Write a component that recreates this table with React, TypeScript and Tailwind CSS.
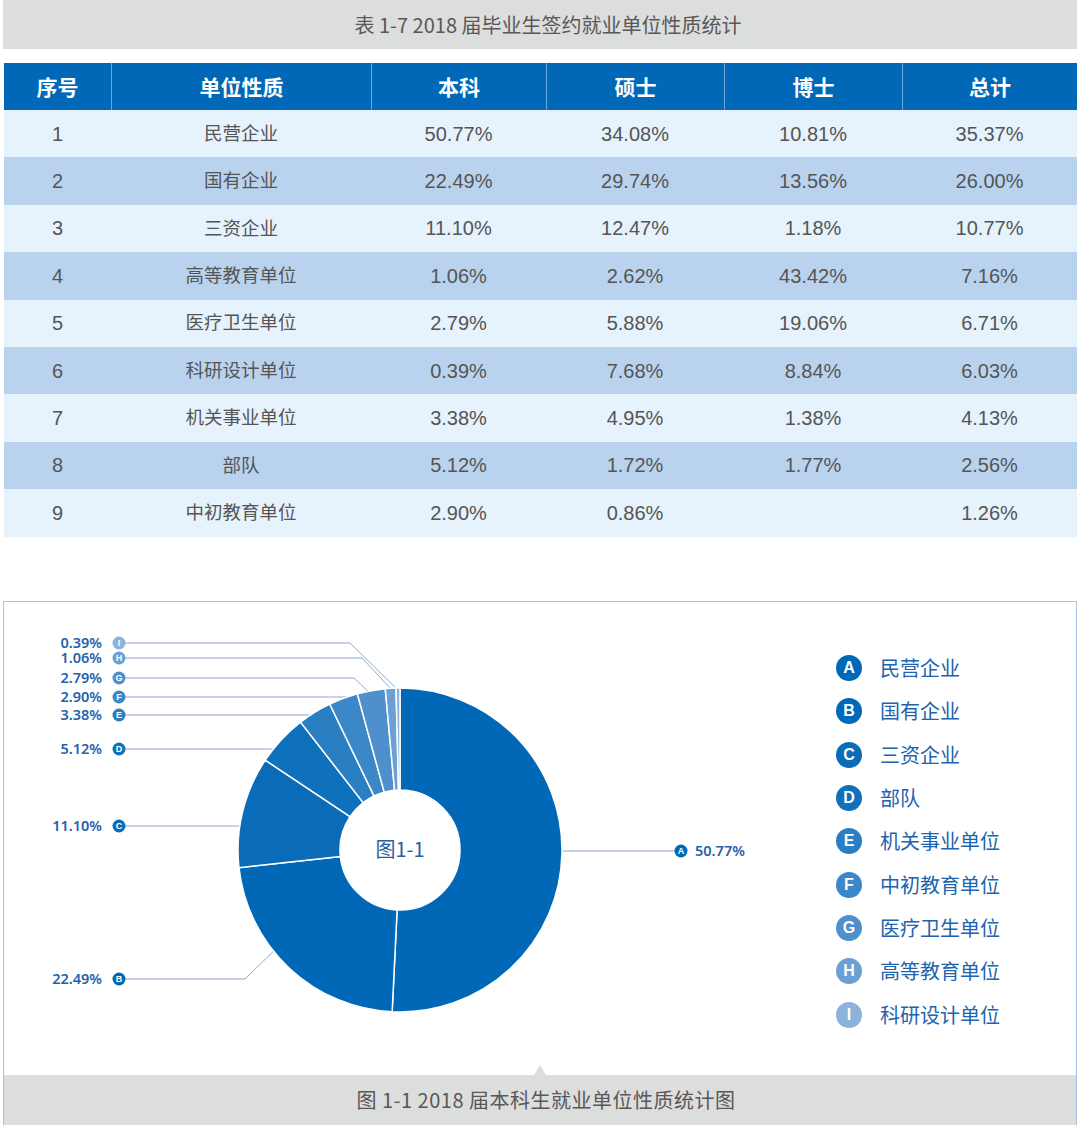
import React from "react";

/* -------------------------------------------------------------------------- */

const TABLE_HEAD = ["序号", "单位性质", "本科", "硕士", "博士", "总计"];

const TABLE_ROWS = [
  ["1", "民营企业", "50.77%", "34.08%", "10.81%", "35.37%"],
  ["2", "国有企业", "22.49%", "29.74%", "13.56%", "26.00%"],
  ["3", "三资企业", "11.10%", "12.47%", "1.18%", "10.77%"],
  ["4", "高等教育单位", "1.06%", "2.62%", "43.42%", "7.16%"],
  ["5", "医疗卫生单位", "2.79%", "5.88%", "19.06%", "6.71%"],
  ["6", "科研设计单位", "0.39%", "7.68%", "8.84%", "6.03%"],
  ["7", "机关事业单位", "3.38%", "4.95%", "1.38%", "4.13%"],
  ["8", "部队", "5.12%", "1.72%", "1.77%", "2.56%"],
  ["9", "中初教育单位", "2.90%", "0.86%", "", "1.26%"],
];

const SLICES = [
  { key: "A", name: "民营企业", value: 50.77, color: "#0068b7" },
  { key: "B", name: "国有企业", value: 22.49, color: "#0068b7" },
  { key: "C", name: "三资企业", value: 11.1, color: "#0a6cb9" },
  { key: "D", name: "部队", value: 5.12, color: "#0f70bc" },
  { key: "E", name: "机关事业单位", value: 3.38, color: "#2a7fc3" },
  { key: "F", name: "中初教育单位", value: 2.9, color: "#3b87c7" },
  { key: "G", name: "医疗卫生单位", value: 2.79, color: "#4e90cb" },
  { key: "H", name: "高等教育单位", value: 1.06, color: "#6c9fd3" },
  { key: "I", name: "科研设计单位", value: 0.39, color: "#8db3dd" },
];

// leader lines, in page coordinates (the svg viewBox is offset to match)
const LEADERS = [
  { key: "I", label: "0.39%", y: 643, pts: "125,643 350,643 398,690" },
  { key: "H", label: "1.06%", y: 658, pts: "125,658 362,658 392,690" },
  { key: "G", label: "2.79%", y: 678, pts: "125,678 354,678 370,693" },
  { key: "F", label: "2.90%", y: 697, pts: "125,697 350,697" },
  { key: "E", label: "3.38%", y: 715, pts: "125,715 320,715" },
  { key: "D", label: "5.12%", y: 749, pts: "125,749 292,749" },
  { key: "C", label: "11.10%", y: 826, pts: "125,826 255,826" },
  { key: "B", label: "22.49%", y: 979, pts: "125,979 245,979 285,940" },
];

const CX = 400;
const CY = 850;
const R = 162;
const r = 60;

const pt = (deg: number, rad: number) => {
  const a = (deg * Math.PI) / 180;
  return [CX + rad * Math.sin(a), CY - rad * Math.cos(a)];
};

const arcPath = (a0: number, a1: number) => {
  const [x0, y0] = pt(a0, R);
  const [x1, y1] = pt(a1, R);
  const [x2, y2] = pt(a1, r);
  const [x3, y3] = pt(a0, r);
  const large = a1 - a0 > 180 ? 1 : 0;
  return `M${x0} ${y0} A${R} ${R} 0 ${large} 1 ${x1} ${y1} L${x2} ${y2} A${r} ${r} 0 ${large} 0 ${x3} ${y3} Z`;
};

const colorOf = (key: string) =>
  SLICES.find((s) => s.key === key)?.color ?? "#0068b7";

/* -------------------------------------------------------------------------- */

const Badge = ({ x, y, k }: { x: number; y: number; k: string }) => (
  <g>
    <circle cx={x} cy={y} r={6.5} fill={colorOf(k)} />
    <text
      x={x}
      y={y + 3.3}
      textAnchor="middle"
      fontSize={9}
      fontWeight={700}
      fill="#fff"
      fontFamily="'Liberation Sans', sans-serif"
    >
      {k}
    </text>
  </g>
);

const Donut = () => {
  let acc = 0;
  const arcs = SLICES.map((s) => {
    const a0 = (acc / 100) * 360;
    acc += s.value;
    const a1 = (acc / 100) * 360;
    return { ...s, d: arcPath(a0, a1) };
  });

  return (
    <svg width={776} height={473} viewBox="4 602 776 473" className="shrink-0">
      {LEADERS.map((l) => (
        <polyline
          key={l.key}
          points={l.pts}
          fill="none"
          stroke="#8ea9cd"
          strokeWidth={1}
        />
      ))}
      <line x1={520} y1={851} x2={676} y2={851} stroke="#8ea9cd" strokeWidth={1} />

      {arcs.map((a) => (
        <path key={a.key} d={a.d} fill={a.color} stroke="#fff" strokeWidth={1.5} />
      ))}

      <text
        x={CX}
        y={CY + 7}
        textAnchor="middle"
        fontSize={20}
        fill="#2b5e9f"
        fontFamily="'Noto Sans CJK SC', sans-serif"
      >
        图1-1
      </text>

      {LEADERS.map((l) => (
        <g key={l.key}>
          <text
            x={102}
            y={l.y + 5}
            textAnchor="end"
            fontSize={14.5}
            fontWeight={600}
            fill="#1f63ae"
            fontFamily="'Noto Sans', sans-serif"
          >
            {l.label}
          </text>
          <Badge x={119} y={l.y} k={l.key} />
        </g>
      ))}

      <Badge x={681} y={851} k="A" />
      <text
        x={695}
        y={856}
        fontSize={14.5}
        fontWeight={600}
        fill="#1f63ae"
        fontFamily="'Noto Sans', sans-serif"
      >
        50.77%
      </text>
    </svg>
  );
};

/* -------------------------------------------------------------------------- */

const App = () => {
  return (
    <div className="w-[1080px] h-[1125px] bg-white font-['Liberation_Sans','Noto_Sans_CJK_SC',sans-serif]">
      <div className="mx-[3px] h-[49px] pl-[16px] bg-[#dcdddd] flex items-center justify-center text-[20px] text-[#595757] font-['Noto_Sans_CJK_SC',sans-serif]">
        表 1-7 2018 届毕业生签约就业单位性质统计
      </div>

      <div className="mt-[14px] ml-[4px] w-[1073px]">
        <div className="grid grid-cols-[107px_260px_175px_178px_178px_175px] h-[47px] bg-[#0068b7]">
          {TABLE_HEAD.map((h, i) => (
            <div
              key={h}
              className={`flex items-center justify-center text-white text-[21px] font-bold font-['Noto_Sans_CJK_SC',sans-serif] ${
                i > 0 ? "border-l border-[#6aa6dc]" : ""
              }`}
            >
              {h}
            </div>
          ))}
        </div>

        {TABLE_ROWS.map((row, ri) => (
          <div
            key={row[0]}
            className={`grid grid-cols-[107px_260px_175px_178px_178px_175px] h-[47.4px] text-[20px] text-[#555555] ${
              ri % 2 === 0 ? "bg-[#e6f2fc]" : "bg-[#b9d3ee]"
            }`}
          >
            {row.map((cell, ci) => (
              <div
                key={ci}
                className={`flex items-center justify-center ${
                  ci === 1 ? "text-[18.5px]" : ""
                }`}
              >
                {cell}
              </div>
            ))}
          </div>
        ))}
      </div>

      <div className="mt-[64px] mx-[3px] border border-b-0 border-[#a9c2e2] flex flex-col">
        <div className="flex h-[473px]">
          <Donut />

          <div className="flex flex-col pl-[56px] pt-[45px]">
            {SLICES.map((s) => (
              <div key={s.key} className="flex items-center gap-[18px] h-[43.3px]">
                <div
                  className="w-[26px] h-[26px] rounded-full flex items-center justify-center text-white text-[16px] font-bold"
                  style={{ backgroundColor: s.color }}
                >
                  {s.key}
                </div>
                <span className="text-[20px] text-[#2163ad] font-['Noto_Sans_CJK_SC',sans-serif]">
                  {s.name}
                </span>
              </div>
            ))}
          </div>
        </div>

        <div className="relative h-[50px] pl-[12px] bg-[#dcdddd] flex items-center justify-center text-[20px] tracking-[0.5px] text-[#595757] font-['Noto_Sans_CJK_SC',sans-serif]">
          <div className="absolute left-1/2 -translate-x-1/2 -top-[10px] w-0 h-0 border-x-[6px] border-x-transparent border-b-[10px] border-b-[#dcdddd]" />
          图 1-1 2018 届本科生就业单位性质统计图
        </div>
      </div>
    </div>
  );
};

export default App;
